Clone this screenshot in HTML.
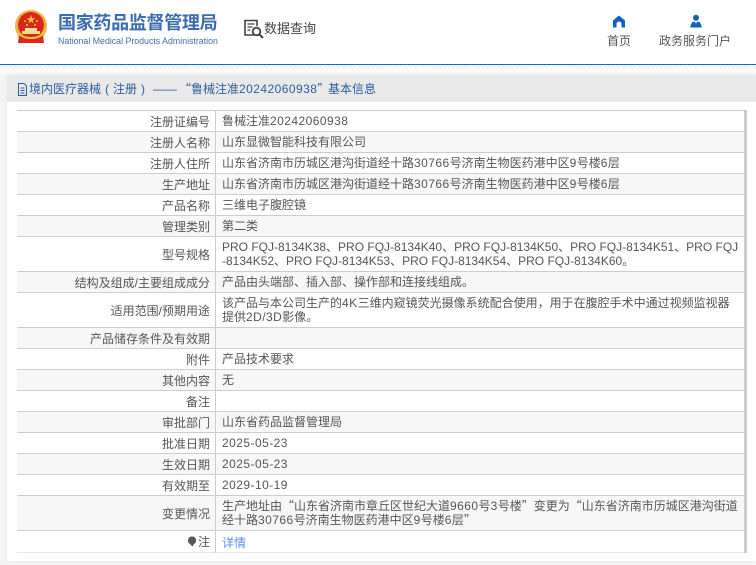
<!DOCTYPE html>
<html lang="zh-CN">
<head>
<meta charset="utf-8">
<title>国家药品监督管理局</title>
<style>
*{box-sizing:border-box}
html,body{margin:0;padding:0;background:#fff}
body{width:756px;height:565px;position:relative;overflow:hidden;font-family:"Liberation Sans","Noto Sans CJK SC",sans-serif;font-size:12px;color:#555}
.abs{position:absolute;white-space:nowrap}
.rule{position:absolute;left:0;top:64px;width:756px;height:1.5px;background:#0f6cc4}
.dots{position:absolute;left:0;top:65px;width:756px;height:4px;background:repeating-linear-gradient(45deg,#e6e6e6 0 1px,#fff 1px 3px)}
.fade{position:absolute;left:0;top:69px;width:756px;height:6px;background:linear-gradient(#fff,#f6f6f6)}
.pg{position:absolute;left:0;top:75px;width:756px;height:490px;background:#f4f4f4}
.card{position:absolute;left:7px;top:75px;width:749px;height:486px;background:#fff;box-shadow:0 0 3px #e4e4e4}
.bar{position:absolute;left:7px;top:75px;width:749px;height:27px;background:#e9e9ea}
.t{position:absolute;color:#2a5d9e;top:82px;line-height:14px;white-space:nowrap}
.r{position:absolute;left:17px;width:727px;border-top:1px solid #ccc;display:block}
.r.g{background:#f7f7f7}
.k{position:absolute;left:0;top:0;bottom:0;width:193px;text-align:right;display:flex;align-items:center;justify-content:flex-end;color:#555;white-space:nowrap}
.v{position:absolute;left:205px;top:0;bottom:0;display:flex;align-items:center;white-space:nowrap;line-height:14.5px;color:#555}
.vl{position:absolute;left:215px;top:110px;width:1px;height:443px;background:#ccc}
.edge{position:absolute;left:744px;top:110px;width:3px;height:443px;background:#ccc}
.l{letter-spacing:.45px}
.q{font-family:"Noto Sans CJK SC",sans-serif}
</style>
</head>
<body>
<svg class="abs" style="left:14px;top:9px" width="34" height="36" viewBox="0 0 34 36">
  <circle cx="17" cy="17" r="16" fill="#e9b53c"/>
  <circle cx="17" cy="16" r="13" fill="#d8261c"/>
  <polygon points="17,6 18.1,9.2 21.4,9.2 18.7,11.2 19.7,14.4 17,12.4 14.3,14.4 15.3,11.2 12.6,9.2 15.9,9.2" fill="#f6cf3c"/>
  <circle cx="11" cy="12" r="1" fill="#f6cf3c"/><circle cx="23" cy="12" r="1" fill="#f6cf3c"/><circle cx="13" cy="16" r="1" fill="#f6cf3c"/><circle cx="21" cy="16" r="1" fill="#f6cf3c"/>
  <path d="M8 22h18v3H8z" fill="#f3d98a"/><path d="M11 19h12v3H11z" fill="#f6e3a6"/>
  <path d="M5 26c3 3 7 4 12 4s9-1 12-4l1 8H4z" fill="#d9281c"/>
  <path d="M4 24c4 4 8 5 13 5s9-1 13-5" stroke="#efc14b" stroke-width="2" fill="none"/>
</svg>
<div class="abs" style="left:58px;top:12px;font-size:18px;line-height:22px;font-weight:700;color:#3a6cae;letter-spacing:-.3px">国家药品监督管理局</div>
<div class="abs" style="left:58px;top:35px;font-size:8.8px;line-height:12px;color:#3f6fae">National Medical Products Administration</div>

<svg class="abs" style="left:243px;top:19px" width="22" height="21" viewBox="0 0 22 21" fill="none" stroke="#444">
  <path d="M11 16H2V1.500h12V7" stroke-width="1.600"/>
  <path d="M4.500 5h7M4.500 8h5M4.500 11h3" stroke-width="1.200"/>
  <circle cx="13.500" cy="12.500" r="3.800" stroke-width="1.800"/>
  <path d="M16.500 15.500l3.500 3.500" stroke-width="2"/>
</svg>
<div class="abs" style="left:264px;top:20px;font-size:13px;line-height:18px;color:#444">数据查询</div>

<svg class="abs" style="left:612px;top:15px" width="14" height="13" viewBox="0 0 14 13">
  <path d="M7 .5L13 5.500V12.500H9.500V8.500C9.500 6 4.500 6 4.500 8.500V12.500H1V5.500z" fill="#0f62c0"/>
</svg>
<svg class="abs" style="left:689px;top:14px" width="14" height="14" viewBox="0 0 14 14">
  <circle cx="7" cy="3.800" r="3" fill="#0f62c0"/>
  <path d="M1 13.500L3 8.200l2.500-.7L7 9.500l1.500-2 2.500.7 2 5.300z" fill="#0f62c0"/>
</svg>
<div class="abs" style="left:607px;top:33px;line-height:16px;color:#555">首页</div>
<div class="abs" style="left:659px;top:33px;line-height:16px;color:#555">政务服务门户</div>

<div class="rule"></div><div class="dots"></div><div class="fade"></div>
<div class="pg"></div><div class="card"></div><div class="bar"></div>

<svg class="abs" style="left:17px;top:83px" width="11" height="13" viewBox="0 0 11 13" fill="none" stroke="#2a5d9e">
  <path d="M1.500.5h5.500l2.500 2.500v9.500h-8z"/><path d="M3.500 5h4M3.500 7.500h4M3.500 10h4"/>
</svg>
<div class="t" style="left:29px">境内医疗器械</div>
<div class="t" style="left:105px">(</div>
<div class="t" style="left:113px">注册</div>
<div class="t" style="left:141px">)</div>
<div class="t" style="left:153px">——</div>
<div class="t" style="left:179px"><span class="q">“</span>鲁械注准<span class="l">20242060938</span><span class="q">”</span></div>
<div class="t" style="left:328px">基本信息</div>

<div class="r" style="top:110px;height:21px"><div class="k">注册证编号</div><div class="v">鲁械注准<span class="l">20242060938</span></div></div>
<div class="r g" style="top:131px;height:21px"><div class="k">注册人名称</div><div class="v">山东显微智能科技有限公司</div></div>
<div class="r" style="top:152px;height:21px"><div class="k">注册人住所</div><div class="v"><span>山东省济南市历城区港沟街道经十路<span class="l">30766</span>号济南生物医药港中区<span class="l">9</span>号楼<span class="l">6</span>层</span></div></div>
<div class="r g" style="top:173px;height:21px"><div class="k">生产地址</div><div class="v"><span>山东省济南市历城区港沟街道经十路<span class="l">30766</span>号济南生物医药港中区<span class="l">9</span>号楼<span class="l">6</span>层</span></div></div>
<div class="r" style="top:194px;height:21px"><div class="k">产品名称</div><div class="v">三维电子腹腔镜</div></div>
<div class="r g" style="top:215px;height:21px"><div class="k">管理类别</div><div class="v">第二类</div></div>
<div class="r" style="top:236px;height:35px"><div class="k">型号规格</div><div class="v"><span>PRO FQJ-8134K38、PRO FQJ-8134K40、PRO FQJ-8134K50、PRO FQJ-8134K51、PRO FQJ<br>-8134K52、PRO FQJ-8134K53、PRO FQJ-8134K54、PRO FQJ-8134K60。</span></div></div>
<div class="r g" style="top:271px;height:21px"><div class="k">结构及组成/主要组成成分</div><div class="v">产品由头端部、插入部、操作部和连接线组成。</div></div>
<div class="r" style="top:292px;height:35px"><div class="k">适用范围/预期用途</div><div class="v"><span>该产品与本公司生产的<span class="l">4K</span>三维内窥镜荧光摄像系统配合使用，用于在腹腔手术中通过视频监视器<br>提供<span class="l">2D/3D</span>影像。</span></div></div>
<div class="r g" style="top:327px;height:21px"><div class="k">产品储存条件及有效期</div></div>
<div class="r" style="top:348px;height:21px"><div class="k">附件</div><div class="v">产品技术要求</div></div>
<div class="r g" style="top:369px;height:21px"><div class="k">其他内容</div><div class="v">无</div></div>
<div class="r" style="top:390px;height:21px"><div class="k">备注</div></div>
<div class="r g" style="top:411px;height:21px"><div class="k">审批部门</div><div class="v">山东省药品监督管理局</div></div>
<div class="r" style="top:432px;height:21px"><div class="k">批准日期</div><div class="v l">2025-05-23</div></div>
<div class="r g" style="top:453px;height:21px"><div class="k">生效日期</div><div class="v l">2025-05-23</div></div>
<div class="r" style="top:474px;height:21px"><div class="k">有效期至</div><div class="v l">2029-10-19</div></div>
<div class="r g" style="top:495px;height:35px"><div class="k">变更情况</div><div class="v"><span>生产地址由<span class="q">“</span>山东省济南市章丘区世纪大道<span class="l">9660</span>号<span class="l">3</span>号楼<span class="q">”</span>变更为<span class="q">“</span>山东省济南市历城区港沟街道<br>经十路<span class="l">30766</span>号济南生物医药港中区<span class="l">9</span>号楼<span class="l">6</span>层<span class="q">”</span></span></div></div>
<div class="r" style="top:530px;height:23px;border-bottom:1px solid #e6e6ee"><div class="k"><svg width="10" height="12" viewBox="0 0 10 12" style="margin-right:1px"><path d="M5 .5a4 4 0 0 1 2 7.500L5.500 10.500 3 8A4 4 0 0 1 5 .5z" fill="#555"/></svg>注</div><div class="v" style="color:#5b8fe8;padding-top:3px">详情</div></div>
<div class="vl"></div><div class="edge"></div>
</body>
</html>
